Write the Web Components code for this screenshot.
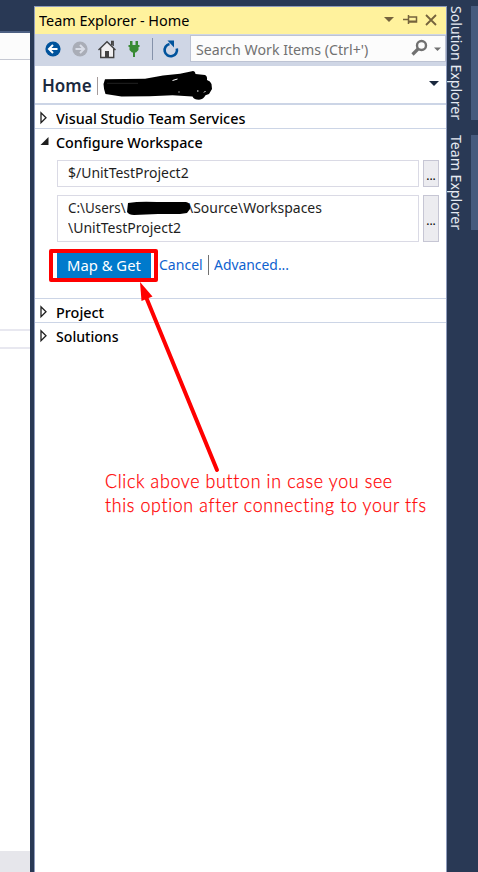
<!DOCTYPE html>
<html lang="en"><head><meta charset="utf-8"><title>Team Explorer</title>
<style>
html,body{margin:0;height:100%;overflow:hidden}
body{font:15px/20px "Noto Sans","Open Sans",sans-serif;color:#1e1e1e}
</style></head><body>
<ide-window></ide-window>
<script>
function define(name, html, setup) {
  const t = document.createElement('template');
  t.innerHTML = html;
  customElements.define(name, class extends HTMLElement {
    connectedCallback() {
      if (this.shadowRoot) return;
      this.attachShadow({mode: 'open'}).append(t.content.cloneNode(true));
      if (setup) setup(this, this.shadowRoot);
    }
  });
}

/* One line of text condensed or widened to a given width */
define('fit-text', `<style>:host{display:inline-block;white-space:pre;flex:none}
span{display:inline-block;transform-origin:0 50%}</style><span></span>`, (el, root) => {
  const s = root.querySelector('span');
  s.textContent = el.getAttribute('text');
  const w = +el.getAttribute('w');
  el.style.width = w + 'px';
  s.style.transform = `scaleX(${w / s.offsetWidth})`;
});

define('editor-strip', `<style>
:host{display:flex;flex-direction:column;width:30px;background:#fff}
.top{height:31px;background:#293955}.band{height:2px;background:#4d6082}
.tab{height:26px;background:#fcfcfc;border-bottom:1px solid #c6c9d3}
.a{height:269px}.l{height:2px;background:#e8e8f0}.b{height:16px}.c{flex:1}.end{height:21px;background:#e6e6eb}
</style><div class="top"></div><div class="band"></div><div class="tab"></div><div class="a"></div><div class="l"></div><div class="b"></div><div class="l"></div><div class="c"></div><div class="end"></div>`);

define('panel-title', `<style>
:host{display:flex;height:27px;background:#fff29d;color:#000;align-items:center;padding-left:4px;box-sizing:border-box}
fit-text{margin-top:-2px}svg{margin-left:auto}
</style><fit-text text="Team Explorer - Home" w="150"></fit-text>
<svg width="66" height="27" viewBox="380 7 66 27"><path d="M384 17h10l-5 5z" fill="#75633d"/>
<g fill="none" stroke="#75633d" stroke-width="1.5"><path d="M403 19.500h5M408.500 15v9M409 17h7.500v5H409M409 21.300h8"/><path d="M426 15l10 10M436 15l-10 10" stroke-width="1.800"/></g></svg>`);

define('search-box', `<style>
:host{display:flex;border:1px solid #bdc3d3;background:#fcfcfc;color:#717171;align-items:center;padding-left:5px;box-sizing:border-box;width:256px;height:27px}
svg{margin-left:auto}
</style><fit-text text="Search Work Items (Ctrl+')" w="172"></fit-text>
<svg width="34" height="25" viewBox="411 36 34 25"><g fill="none" stroke="#717171"><circle cx="421.500" cy="45.500" r="4.500" stroke-width="2.400"/><path d="M418 49l-5.500 5.500" stroke-width="3.200"/></g><path d="M434 47.500h7l-3.500 3.500z" fill="#717171"/></svg>`);

define('tool-bar', `<style>
:host{display:flex;height:32px;background:#cfd6e5;align-items:flex-start;justify-content:space-between}
search-box{margin-top:1px;}
</style><svg width="150" height="32" viewBox="35 34 150 32">
<circle cx="53" cy="49" r="7.600" fill="#00539c"/><path d="M57.500 49h-8M53 45l-4 4 4 4" fill="none" stroke="#fff" stroke-width="2"/>
<circle cx="80" cy="49" r="7.600" fill="#a9adb7"/><path d="M75.500 49h8M80 45l4 4-4 4" fill="none" stroke="#d9dde7" stroke-width="2"/>
<path d="M101 48v9.300h12.500V48L107 42z" fill="#f0eff1"/><path d="M98.500 50l8.500-8.300 8.500 8.300M100.700 48.500v9h13v-9M111.700 45v-3.500h1.500V46" fill="none" stroke="#424242" stroke-width="1.400"/><path d="M105 51h4v6.500h-4z" fill="#424242"/>
<path d="M130 41h2.500v4H130zM135.500 41h2.500v4h-2.500zM128.500 45h11v2h-1v3l-2.500 2.500h-1V57h-2v-4.500h-1l-2.500-2.500v-3h-1z" fill="#388a34"/>
<path d="M152.500 38v22" stroke="#8592aa"/>
<path d="M169.500 44a6.200 6.200 0 1 0 7.300 4.500" fill="none" stroke="#00539c" stroke-width="2.600"/><path d="M167.500 40.500h6.500v7z" fill="#00539c"/>
</svg><search-box></search-box>`);

define('page-header', `<style>
:host{display:flex;position:relative;height:37px;border-bottom:2px solid #ccd5e6;align-items:center;padding-left:7px;color:#1b293e;font-weight:600;font-size:17px}
fit-text{margin-top:2px}
.bar{width:1px;height:18px;background:#a59b9b;margin:3px 0 0 5px}.caret{margin-left:auto}
.ink{position:absolute;left:66px;top:2px}
</style><fit-text text="Home" w="50"></fit-text><div class="bar"></div>
<svg class="caret" width="18" height="37" viewBox="428 66 18 37"><path d="M429 81h10l-5 5z" fill="#1b293e"/></svg>
<svg class="ink" width="115" height="34" viewBox="101 68 115 34"><path d="M105 79.300l40-.6 18-3.300 17-1.700 12-2.500q3-.6 3.500 2.800l9.500 1q2.500 1 2 5 3.500 1 4.500 4l.5 5-3 5-3.500 1.200q-2 4-6.500 4.500-5 0-6.500-3.200l-20-1.200-23 1-28 .2-8-1.300-8-1.200q-2-6-2-10z" fill="#000"/><path d="M172.500 80.500l5-1.500M197 91h1.500M204 92.500l1.500-1.500M178.500 92h1" stroke="#fff" fill="none" stroke-width="1"/><path d="M107 83.300h31" stroke="#444" stroke-width=".5"/></svg>`);

define('tree-section', `<style>
:host{display:flex;flex-direction:column;color:#000;font-weight:500}
header{display:flex;height:23px;padding-left:4px;align-items:flex-start;padding-top:3px;box-sizing:border-box}
svg{width:17px;height:20px;flex:none}fit-text{height:20px}
</style><header><svg viewBox="0 0 17 20"></svg></header><slot></slot>`, (el, root) => {
  root.querySelector('svg').innerHTML = el.hasAttribute('open')
    ? '<path d="M1.500 13h8V5z" fill="#1e1e1e"/>'
    : '<path d="M2 4.700v10l5-5z" fill="none" stroke="#1e1e1e" stroke-width="1.300"/>';
  const f = document.createElement('fit-text');
  f.setAttribute('text', el.getAttribute('label'));
  f.setAttribute('w', el.getAttribute('w'));
  root.querySelector('header').append(f);
});

define('path-field', `<style>
:host{display:flex;gap:4px;height:27px;color:#1e1e1e;font-weight:400}
.box{width:362px;border:1px solid #dadae5;box-sizing:border-box;padding:1px 0 0 10px;position:relative}
.more{width:16px;border:1px solid #c6c6d4;background:#ececf0;box-sizing:border-box;display:flex;align-items:center;justify-content:center;font-size:12px;color:#000;padding-top:4px;}
</style><div class="box"><slot></slot></div><div class="more">...</div>`);

define('action-row', `<style>
:host{display:flex;position:relative;height:26px;align-items:center;color:#0e62cf;font-weight:400}
.go{width:94px;height:26px;background:#007acc;color:#fff;display:flex;align-items:center;justify-content:center}
.c,.d{margin-top:-2px}.c{margin-left:8px}.sep{width:1px;height:20px;background:#717171;margin:0 5px 0 5px}
.note{position:absolute;left:-9px;top:-4px;overflow:visible;z-index:2}
</style><div class="go"><fit-text text="Map &amp; Get" w="74"></fit-text></div><fit-text class="c" text="Cancel" w="44"></fit-text><div class="sep"></div><fit-text class="d" text="Advanced..." w="75"></fit-text>
<svg class="note" width="182" height="226" viewBox="48 248 182 226"><path d="M51 251h105v29H51z" fill="none" stroke="#f00" stroke-width="4" stroke-linejoin="round"/><path d="M217 470L146 297" stroke="#f00" stroke-width="4" stroke-linecap="round"/><path d="M140 282L152.500 296.500 141.500 301z" fill="#f00"/></svg>`);

define('red-note', `<style>
:host{display:flex;flex-direction:column;font:300 19px/24px Lato,"Open Sans",sans-serif;-webkit-text-stroke:.25px #f00;color:#f00;letter-spacing:.7px}
</style><fit-text text="Click above button in case you see" w="288"></fit-text><fit-text text="this option after connecting to your tfs" w="322"></fit-text>`);

define('side-tab', `<style>
:host{display:flex;justify-content:space-between;height:var(--h);color:#e6eaf2}
.label{width:20px;height:100%;writing-mode:vertical-rl}
.label span{display:block;transform-origin:0 0;white-space:nowrap}
.edge{width:7px;background:#465a7d}
</style><div class="label"><span></span></div><div class="edge"></div>`, (el, root) => {
  const s = root.querySelector('span');
  s.textContent = el.getAttribute('text');
  const r = document.createRange(); r.selectNodeContents(s);
  s.style.transform = `scaleY(${+el.getAttribute('len') / r.getBoundingClientRect().height})`;
});

define('ide-window', `<style>
:host{display:grid;grid-template-columns:30px 4px 413px 31px;width:478px;height:872px;background:#293955}
main{grid-column:3;margin-top:6px;background:#fff;border:1px solid #8e9bbc;border-bottom:0;display:flex;flex-direction:column}
aside{grid-column:4;padding-top:6px;display:flex;flex-direction:column;gap:15px}
.body{display:flex;flex-direction:column;margin-left:22px;padding-top:8px;height:138px;gap:8px}
.line{border-bottom:1px solid #ccd5e6}
.two{height:47px}
.ink{position:absolute;left:68px;top:5px}
.last{margin-top:2px}
red-note{margin:123px 0 0 70px}
</style><editor-strip></editor-strip><main>
<panel-title></panel-title><tool-bar></tool-bar><page-header></page-header>
<tree-section class="line" label="Visual Studio Team Services" w="189"></tree-section>
<tree-section class="line" open label="Configure Workspace" w="147"><div class="body">
<path-field><fit-text text="$/UnitTestProject2" w="121"></fit-text></path-field>
<path-field class="two"><fit-text text="C:\\Users\\" w="58"></fit-text><fit-text text="\\Source\\Workspaces" w="134" style="margin-left:62px"></fit-text><br><fit-text text="\\UnitTestProject2" w="113"></fit-text><svg class="ink" width="66" height="16" viewBox="125 201 66 16"><path d="M127 203q12-2 29-1h29q5 1 4 7l-3 4-7 1h-22l-24 1q-5 0-7-3z" fill="#000"/></svg></path-field>
<action-row class="last"></action-row>
</div></tree-section>
<tree-section class="line" label="Project" w="48"></tree-section>
<tree-section label="Solutions" w="63"></tree-section>
<red-note></red-note>
</main><aside><side-tab text="Solution Explorer" len="114" style="--h:114px"></side-tab><side-tab text="Team Explorer" len="95" style="--h:95px"></side-tab></aside>`);
</script></body></html>
